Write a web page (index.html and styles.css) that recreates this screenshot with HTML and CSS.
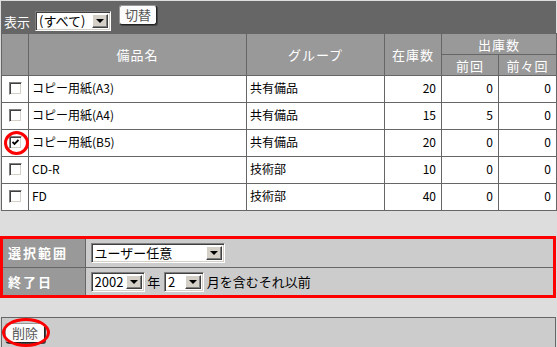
FILE: index.html
```html
<!DOCTYPE html>
<html lang="ja">
<head>
    <meta charset="UTF-8">
    <title>備品在庫一覧</title>
    <link rel="stylesheet" href="styles.css">
</head>
<body>
    <!-- 表示切替 -->
    <form class="filter-bar" action="#">
        <span class="filter-label">表示</span>
        <span class="combo combo-view">
            <select><option>(すべて)</option></select>
            <span class="combo-btn"><i class="tri"></i></span>
        </span>
        <button type="button" class="btn btn-switch">切替</button>
    </form>

    <!-- 在庫一覧 -->
    <table class="stock">
        <colgroup>
            <col style="width: 27px">
            <col style="width: 218px">
            <col style="width: 138px">
            <col style="width: 57px">
            <col style="width: 57px">
            <col style="width: 58px">
        </colgroup>
        <thead>
            <tr class="head-top">
                <th rowspan="2"></th>
                <th rowspan="2">備品名</th>
                <th rowspan="2">グループ</th>
                <th rowspan="2">在庫数</th>
                <th colspan="2">出庫数</th>
            </tr>
            <tr class="head-sub">
                <th>前回</th>
                <th>前々回</th>
            </tr>
        </thead>
        <tbody>
            <tr>
                <td class="cb-cell"><label class="cb"><input type="checkbox"></label></td>
                <td>コピー用紙(A3)</td>
                <td>共有備品</td>
                <td class="num">20</td>
                <td class="num">0</td>
                <td class="num">0</td>
            </tr>
            <tr>
                <td class="cb-cell"><label class="cb"><input type="checkbox"></label></td>
                <td>コピー用紙(A4)</td>
                <td>共有備品</td>
                <td class="num">15</td>
                <td class="num">5</td>
                <td class="num">0</td>
            </tr>
            <tr>
                <td class="cb-cell">
                    <label class="cb"><input type="checkbox" checked>
                        <svg class="tick" viewBox="0 0 7 7" width="7" height="7"><path d="M0.5 3 L2.5 5 L6.5 1" fill="none" stroke="#000" stroke-width="1.8"/></svg>
                    </label>
                    <span class="mark mark-check"></span>
                </td>
                <td>コピー用紙(B5)</td>
                <td>共有備品</td>
                <td class="num">20</td>
                <td class="num">0</td>
                <td class="num">0</td>
            </tr>
            <tr>
                <td class="cb-cell"><label class="cb"><input type="checkbox"></label></td>
                <td>CD-R</td>
                <td>技術部</td>
                <td class="num">10</td>
                <td class="num">0</td>
                <td class="num">0</td>
            </tr>
            <tr>
                <td class="cb-cell"><label class="cb"><input type="checkbox"></label></td>
                <td>FD</td>
                <td>技術部</td>
                <td class="num">40</td>
                <td class="num">0</td>
                <td class="num">0</td>
            </tr>
        </tbody>
    </table>

    <!-- 削除範囲 -->
    <div class="range-box">
        <table class="range">
            <tr>
                <th>選択範囲</th>
                <td>
                    <span class="combo combo-range">
                        <select><option>ユーザー任意</option></select>
                        <span class="combo-btn"><i class="tri"></i></span>
                    </span>
                </td>
            </tr>
            <tr>
                <th>終了日</th>
                <td>
                    <span class="combo combo-year">
                        <select><option>2002</option></select>
                        <span class="combo-btn"><i class="tri"></i></span>
                    </span>
                    <span class="unit">年</span>
                    <span class="combo combo-month">
                        <select><option>2</option></select>
                        <span class="combo-btn"><i class="tri"></i></span>
                    </span>
                    <span class="unit">月を含むそれ以前</span>
                </td>
            </tr>
        </table>
    </div>

    <div class="action-bar">
        <span class="action-wrap">
            <button type="button" class="btn btn-delete">削除</button>
            <span class="mark mark-delete"></span>
        </span>
    </div>
</body>
</html>
```

FILE: styles.css
```css
* {
    margin: 0;
    padding: 0;
    box-sizing: border-box;
}

body {
    font-family: "MS PGothic", "Noto Sans CJK JP", sans-serif;
    font-size: 12px;
    color: #000;
    background-color: #dddddd;
    padding-top: 1px;
}

/* Filter bar */
.filter-bar {
    display: flex;
    align-items: flex-start;
    margin-left: 1px;
    width: 555px;
    height: 32px;
    background-color: #666666;
    padding: 4px 0 0 3px;
}

.filter-label {
    color: #fff;
    font-size: 13px;
    margin-top: 7px;
    margin-right: 5px;
}

/* Classic combo box */
.combo {
    display: inline-flex;
    align-items: stretch;
    height: 20px;
    background-color: #fff;
    border: 1px solid;
    border-color: #808080 #fff #fff #808080;
    box-shadow: inset 1px 1px 0 #404040, inset -1px -1px 0 #d4d0c8;
    padding: 2px;
    vertical-align: middle;
}

.combo select {
    appearance: none;
    -webkit-appearance: none;
    border: none;
    outline: none;
    background: transparent;
    font-family: inherit;
    font-size: 13px;
    color: #000;
    flex: 1;
    min-width: 0;
    padding-left: 1px;
    line-height: 14px;
}

.combo-btn {
    width: 16px;
    background-color: #d4d0c8;
    border: 1px solid;
    border-color: #fff #404040 #404040 #fff;
    box-shadow: inset -1px -1px 0 #808080;
    display: flex;
    align-items: center;
    justify-content: center;
}

.tri {
    width: 0;
    height: 0;
    border-left: 4px solid transparent;
    border-right: 4px solid transparent;
    border-top: 4px solid #000;
}

.combo-view {
    width: 76px;
    margin-top: 6px;
}

/* Buttons */
.btn {
    font-family: inherit;
    font-size: 13px;
    line-height: 16px;
    color: #555;
    background-color: #fcfcfc;
    border: 1px solid #999;
    border-right-color: #222;
    border-bottom-color: #222;
    border-radius: 3px;
    box-shadow: 1px 1px 0 #444;
    height: 20px;
    padding: 0;
    white-space: nowrap;
    cursor: pointer;
}

.btn-switch {
    margin-left: 8px;
    width: 38px;
}

/* Stock table */
.stock {
    margin-left: 1px;
    width: 555px;
    table-layout: fixed;
    border-collapse: collapse;
    background-color: #fff;
}

.stock th,
.stock td {
    border: 1px solid #666666;
}

.stock th {
    background-color: #999999;
    color: #fff;
    font-weight: normal;
    font-size: 13px;
    letter-spacing: 1px;
    text-align: center;
}

.head-top th {
    height: 21px;
}

.head-sub th {
    height: 21px;
}

.stock td {
    height: 27px;
    padding: 0 3px 3px;
    white-space: nowrap;
}

.stock td.num {
    text-align: right;
    padding-right: 5px;
}

.stock td.cb-cell {
    padding: 0 0 1px;
    position: relative;
}

/* Classic checkbox */
.cb {
    display: block;
    position: relative;
    width: 13px;
    height: 13px;
    margin: 0 auto;
}

.cb input {
    appearance: none;
    -webkit-appearance: none;
    display: block;
    width: 13px;
    height: 13px;
    background-color: #fff;
    border: 1px solid;
    border-color: #808080 #fff #fff #808080;
    box-shadow: inset 1px 1px 0 #404040, inset -1px -1px 0 #d4d0c8;
}

.tick {
    position: absolute;
    left: 3px;
    top: 3px;
}

/* Red annotation marks */
.mark {
    position: absolute;
    border: 3px solid #ff0000;
    border-radius: 50%;
    pointer-events: none;
}

.mark-check {
    left: 2px;
    top: 1px;
    width: 25px;
    height: 24px;
}

/* Range box */
.range-box {
    margin-top: 25px;
    width: 556px;
    border: 3px solid #ff0000;
}

.range {
    width: 100%;
    border-collapse: collapse;
}

.range th,
.range td {
    height: 28px;
    border-bottom: 1px solid #666666;
}

.range tr:last-child th,
.range tr:last-child td {
    border-bottom: none;
}

.range th {
    width: 82px;
    background-color: #999999;
    color: #fff;
    font-weight: bold;
    font-size: 13px;
    letter-spacing: 2px;
    text-align: left;
    padding-left: 5px;
    border-right: 1px solid #666666;
}

.range td {
    background-color: #cccccc;
    padding-left: 5px;
    white-space: nowrap;
}

.combo-range {
    width: 134px;
}

.combo-year {
    width: 54px;
}

.combo-month {
    width: 40px;
    margin-left: 1px;
}

.unit {
    font-size: 13px;
    vertical-align: middle;
}

/* Action bar */
.action-bar {
    margin: 19px 0 0 1px;
    width: 555px;
    height: 31px;
    background-color: #cccccc;
    border: 1px solid #666666;
    padding: 5px 0 0 3px;
}

.action-wrap {
    position: relative;
    display: inline-block;
}

.btn-delete {
    width: 40px;
}

.mark-delete {
    left: -3px;
    top: -5px;
    width: 48px;
    height: 29px;
}
```
